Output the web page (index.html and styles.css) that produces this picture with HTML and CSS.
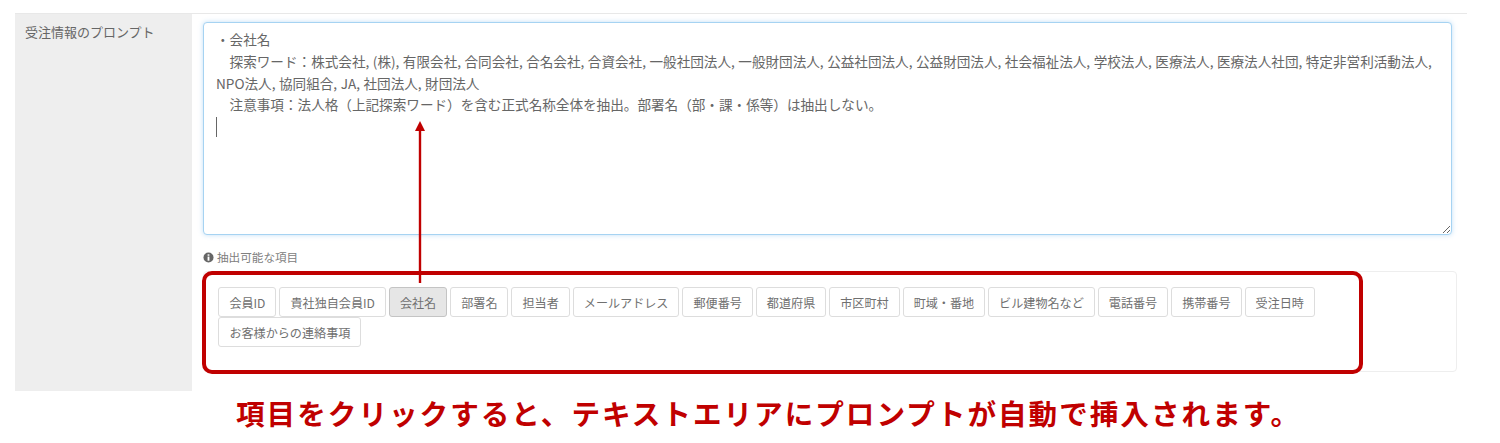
FILE: index.html
```html
<!DOCTYPE html>
<html lang="en">
<head>
    <meta charset="UTF-8">
    <title>受注情報のプロンプト</title>
    <link rel="stylesheet" href="styles.css">
</head>
<body>

<div class="form-row">
    <div class="form-label">受注情報のプロンプト</div>
    <div class="form-body">
        <div class="prompt-wrap">
            <textarea class="prompt" spellcheck="false">・会社名
　探索ワード：株式会社, (株), 有限会社, 合同会社, 合名会社, 合資会社, 一般社団法人, 一般財団法人, 公益社団法人, 公益財団法人, 社会福祉法人, 学校法人, 医療法人, 医療法人社団, 特定非営利活動法人, NPO法人, 協同組合, JA, 社団法人, 財団法人
　注意事項：法人格（上記探索ワード）を含む正式名称全体を抽出。部署名（部・課・係等）は抽出しない。
</textarea>
            <span class="caret"></span>
        </div>

        <p class="hint">
            <svg class="hint-icon" viewBox="0 0 12 12"><circle cx="6" cy="6" r="5.5" fill="#666"/><rect x="5" y="5" width="2" height="4.5" fill="#fff"/><rect x="5" y="2.5" width="2" height="1.6" fill="#fff"/></svg>
            抽出可能な項目
        </p>

        <div class="items-panel">
            <button type="button" class="item">会員ID</button>
            <button type="button" class="item">貴社独自会員ID</button>
            <button type="button" class="item active">会社名</button>
            <button type="button" class="item">部署名</button>
            <button type="button" class="item">担当者</button>
            <button type="button" class="item">メールアドレス</button>
            <button type="button" class="item">郵便番号</button>
            <button type="button" class="item">都道府県</button>
            <button type="button" class="item">市区町村</button>
            <button type="button" class="item">町域・番地</button>
            <button type="button" class="item">ビル建物名など</button>
            <button type="button" class="item">電話番号</button>
            <button type="button" class="item">携帯番号</button>
            <button type="button" class="item">受注日時</button>
            <button type="button" class="item">お客様からの連絡事項</button>
        </div>
    </div>
</div>

<p class="note">項目をクリックすると、テキストエリアにプロンプトが自動で挿入されます。</p>

<!-- annotation drawn over the form -->
<div class="red-box"></div>
<svg class="red-arrow" width="16" height="162" viewBox="0 0 16 162">
    <path d="M8 9V162" stroke="#c00000" stroke-width="2.4" fill="none"/>
    <path d="M8 0L13 10H3Z" fill="#c00000"/>
</svg>

</body>
</html>
```

FILE: styles.css
```css
html, body {
    margin: 0;
    height: 443px;
    overflow: hidden;
    background: #fff;
}

body {
    position: relative;
    font-family: "Noto Sans CJK JP", "Noto Sans", sans-serif;
    color: #666;
    padding: 13px 33px 0 15px;
    box-sizing: border-box;
}

.form-row {
    display: flex;
    border-top: 1px solid #e8e8e8;
    height: 377px;
}

.form-label {
    width: 177px;
    flex: none;
    box-sizing: border-box;
    background: #eee;
    padding: 8px 10px;
    font-size: 13px;
    line-height: 20px;
    color: #666;
}

.form-body {
    flex: 1;
    padding: 8px 10px 0 11px;
    min-width: 0;
}

.prompt-wrap {
    position: relative;
    width: 1249px;
    height: 213px;
}

.prompt {
    display: block;
    width: 100%;
    height: 100%;
    box-sizing: border-box;
    padding: 6px 12px;
    border: 1px solid #a6d3f2;
    border-radius: 4px;
    box-shadow: 0 0 5px rgba(102, 175, 233, 0.4);
    font-family: inherit;
    font-size: 13.6px;
    line-height: 21.8px;
    word-spacing: 0.45px;
    color: #666;
    outline: none;
}

.caret {
    position: absolute;
    left: 13px;
    top: 95px;
    width: 1px;
    height: 20px;
    background: #666;
}

.hint {
    margin: 14px 0 6px;
    font-size: 11.6px;
    line-height: 16px;
    color: #808080;
    display: flex;
    align-items: center;
    gap: 3px;
}

.hint-icon {
    width: 11px;
    height: 11px;
}

.items-panel {
    display: flex;
    flex-wrap: wrap;
    align-content: flex-start;
    column-gap: 3px;
    width: 1254px;
    height: 101px;
    box-sizing: border-box;
    padding: 15px 14px 15px 14.4px;
    border: 1px solid #eee;
    border-radius: 4px;
}

.item {
    height: 30px;
    padding: 0 10px;
    font-family: inherit;
    font-size: 12.1px;
    color: #707070;
    background: #fff;
    border: 1px solid #ddd;
    border-radius: 3px;
}

.item.active {
    background: #e6e6e6;
    border-color: #c4c4c4;
}

.note {
    margin: 2px 0 0;
    font-size: 28.6px;
    line-height: 40px;
    font-weight: 700;
    letter-spacing: 2px;
    color: #c00000;
    white-space: nowrap;
    padding-left: 221px;
}

.red-box {
    position: absolute;
    left: 202px;
    top: 271px;
    width: 1161px;
    height: 103px;
    box-sizing: border-box;
    border: 4px solid #c00000;
    border-radius: 10px;
}

.red-arrow {
    position: absolute;
    left: 412px;
    top: 121px;
}
```
